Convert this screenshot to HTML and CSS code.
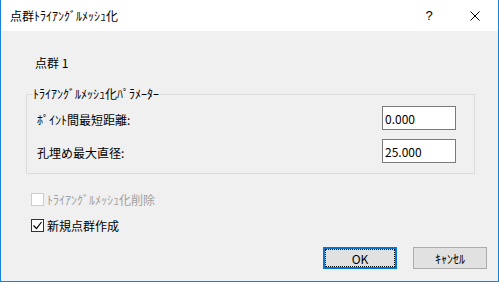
FILE: index.html
```html
<!DOCTYPE html>
<html lang="ja">
<head>
    <meta charset="UTF-8">
    <title>点群ﾄﾗｲｱﾝｸﾞﾙﾒｯｼｭ化</title>
    <link rel="stylesheet" href="styles.css">
</head>
<body>
    <div class="window">
        <div class="titlebar">
            <span class="title">点群ﾄﾗｲｱﾝｸﾞﾙﾒｯｼｭ化</span>
            <span class="help-btn">?</span>
            <span class="close-btn">
                <svg width="10" height="10" viewBox="0 0 10 10">
                    <path d="M0.5 0.5 L9.5 9.5 M9.5 0.5 L0.5 9.5" stroke="#000" stroke-width="1" fill="none"/>
                </svg>
            </span>
        </div>
        <div class="content">
            <div class="cloud-name">点群 1</div>
            <fieldset class="group">
                <legend>ﾄﾗｲｱﾝｸﾞﾙﾒｯｼｭ化ﾊﾟﾗﾒｰﾀｰ</legend>
                <div class="field-row">
                    <label for="min-dist">ﾎﾟｲﾝﾄ間最短距離:</label>
                    <input id="min-dist" class="num-input" type="text" value="0.000">
                </div>
                <div class="field-row">
                    <label for="max-hole">孔埋め最大直径:</label>
                    <input id="max-hole" class="num-input" type="text" value="25.000">
                </div>
            </fieldset>
            <div class="check-row disabled">
                <span class="check-box"></span>
                <span>ﾄﾗｲｱﾝｸﾞﾙﾒｯｼｭ化削除</span>
            </div>
            <div class="check-row second">
                <span class="check-box checked">
                    <svg width="11" height="11" viewBox="0 0 11 11">
                        <path d="M1.5 5.5 L4.5 8.5 L9.5 2" stroke="#000" stroke-width="1.2" fill="none"/>
                    </svg>
                </span>
                <span>新規点群作成</span>
            </div>
            <div class="buttons">
                <button class="btn default">OK</button>
                <button class="btn">ｷｬﾝｾﾙ</button>
            </div>
        </div>
    </div>
</body>
</html>
```
FILE: styles.css
```css
body {
    margin: 0;
    font-family: "Noto Sans CJK JP", "Noto Sans", sans-serif;
    font-size: 12px;
    color: #000;
    background: #fff;
}
.window {
    width: 499px;
    height: 282px;
    box-sizing: border-box;
    border: 1px solid #1883d7;
    border-top: none;
    display: flex;
    flex-direction: column;
}
.titlebar {
    height: 31px;
    flex: none;
    display: flex;
    align-items: center;
    background: #fff;
}
.title {
    flex: 1;
    padding-left: 9px;
    line-height: 16px;
}
.help-btn {
    width: 46px;
    text-align: center;
    font-family: "Liberation Sans", sans-serif;
    font-size: 13px;
}
.close-btn {
    width: 46px;
    height: 31px;
    display: flex;
    align-items: center;
    justify-content: center;
}
.content {
    flex: 1;
    background: #f0f0f0;
    display: flex;
    flex-direction: column;
}
.cloud-name {
    margin-top: 24px;
    padding-left: 34px;
    line-height: 16px;
}
.group {
    margin: 15px 23px 0 25px;
    padding: 4px 18px 10px 0;
    border: 1px solid #dcdcdc;
}
.group legend {
    margin-left: 5px;
    padding: 0 1px;
    line-height: 16px;
}
.field-row {
    display: flex;
    align-items: center;
    justify-content: space-between;
    height: 24px;
    padding-left: 10px;
}
.field-row + .field-row {
    margin-top: 9px;
}
.field-row label {
    padding-top: 3px;
}
.num-input {
    width: 74px;
    height: 24px;
    box-sizing: border-box;
    border: 1px solid #7a7a7a;
    background: #fff;
    font-family: "Noto Sans CJK JP", "Noto Sans", sans-serif;
    font-size: 12px;
    padding: 0 2px;
    margin: 0;
    outline: none;
}
.check-row {
    display: flex;
    align-items: center;
    height: 16px;
    margin-top: 17px;
    padding-left: 30px;
}
.check-row.second {
    margin-top: 10px;
}
.check-box {
    width: 13px;
    height: 13px;
    box-sizing: border-box;
    border: 1px solid #333;
    background: #fff;
    margin-right: 3px;
    display: flex;
    align-items: center;
    justify-content: center;
}
.check-row.disabled {
    color: #a0a0a0;
}
.check-row.disabled .check-box {
    border-color: #cccccc;
}
.buttons {
    display: flex;
    justify-content: flex-end;
    gap: 16px;
    margin-top: 14px;
    padding-right: 11px;
}
.btn {
    width: 74px;
    height: 22px;
    box-sizing: border-box;
    border: 1px solid #adadad;
    background: #e1e1e1;
    font-family: "Noto Sans CJK JP", "Noto Sans", sans-serif;
    font-size: 12px;
    color: #000;
    padding: 0;
    margin: 0;
}
.btn.default {
    border: 2px solid #0078d7;
    outline: 1px dotted #000;
    outline-offset: -3px;
}
```
